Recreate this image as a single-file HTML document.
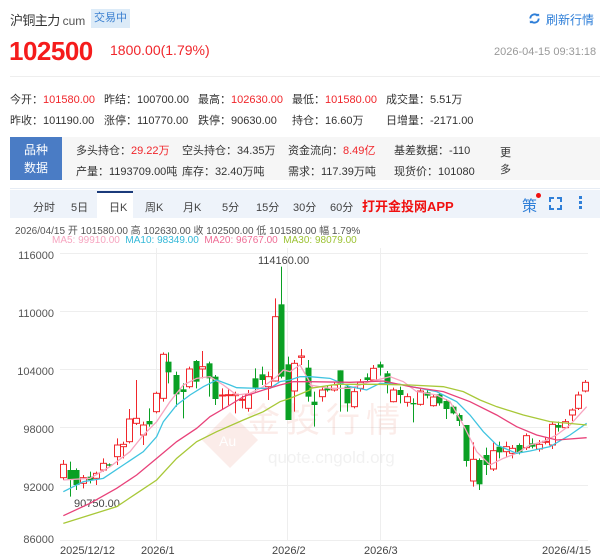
<!DOCTYPE html>
<html><head><meta charset="utf-8"><style>
*{margin:0;padding:0;box-sizing:border-box}
body{width:600px;height:555px;background:#fff;font-family:"Liberation Sans","Noto Sans CJK SC",sans-serif;position:relative;overflow:hidden;color:#333}
.a{position:absolute;white-space:nowrap}
.r{color:#f0262b}
.s{font-size:11px}
</style></head><body>
<div class="a" style="left:10px;top:10px;font-size:13px;color:#333;letter-spacing:-0.6px">沪铜主力 <span style="font-size:12px;color:#555;letter-spacing:0">cum</span></div>
<div class="a" style="left:91px;top:9px;width:39px;height:19px;background:#dcebf8;color:#3b80d0;font-size:11px;line-height:19px;text-align:center">交易中</div>
<svg class="a" style="left:528px;top:12px" width="13" height="13" viewBox="0 0 14 14"><path d="M2.5 7a4.5 4.5 0 0 1 8-2.8" stroke="#2f7fd8" stroke-width="2" fill="none"/><path d="M11.5 7a4.5 4.5 0 0 1-8 2.8" stroke="#2f7fd8" stroke-width="2" fill="none"/><path d="M9 2l3 0 0 3z" fill="#2f7fd8"/><path d="M5 12l-3 0 0-3z" fill="#2f7fd8"/></svg>
<div class="a" style="left:546px;top:11px;color:#2f7fd8;font-size:12px">刷新行情</div>
<div class="a" style="left:9px;top:36px;font-size:26px;font-weight:bold;color:#f51c1c;letter-spacing:-0.5px">102500</div>
<div class="a" style="left:110px;top:42px;font-size:14px;color:#f0262b">1800.00(1.79%)</div>
<div class="a" style="left:494px;top:46px;font-size:11px;color:#999">2026-04-15 09:31:18</div>
<div class="a" style="left:10px;top:76px;width:590px;height:1px;background:#eee"></div>

<div class="a s" style="left:10px;top:91px">今开：<span class="r">101580.00</span></div>
<div class="a s" style="left:104px;top:91px">昨结：100700.00</div>
<div class="a s" style="left:198px;top:91px">最高：<span class="r">102630.00</span></div>
<div class="a s" style="left:292px;top:91px">最低：<span class="r">101580.00</span></div>
<div class="a s" style="left:386px;top:91px">成交量：5.51万</div>
<div class="a s" style="left:10px;top:112px">昨收：101190.00</div>
<div class="a s" style="left:104px;top:112px">涨停：110770.00</div>
<div class="a s" style="left:198px;top:112px">跌停：90630.00</div>
<div class="a s" style="left:292px;top:112px">持仓：16.60万</div>
<div class="a s" style="left:386px;top:112px">日增量：-2171.00</div>

<div class="a" style="left:62px;top:137px;width:538px;height:43px;background:#f6f6f6"></div>
<div class="a" style="left:10px;top:137px;width:52px;height:43px;background:#4a7cc5;color:#fff;font-size:12px;line-height:18px;text-align:center;padding-top:4px;white-space:normal">品种<br>数据</div>
<div class="a s" style="left:76px;top:142px">多头持仓：<span class="r">29.22万</span></div>
<div class="a s" style="left:182px;top:142px">空头持仓：34.35万</div>
<div class="a s" style="left:288px;top:142px">资金流向：<span class="r">8.49亿</span></div>
<div class="a s" style="left:394px;top:142px">基差数据：-110</div>
<div class="a s" style="left:76px;top:163px">产量：1193709.00吨</div>
<div class="a s" style="left:182px;top:163px">库存：32.40万吨</div>
<div class="a s" style="left:288px;top:163px">需求：117.39万吨</div>
<div class="a s" style="left:394px;top:163px">现货价：101080</div>
<div class="a s" style="left:500px;top:145px;line-height:17px;white-space:normal;width:12px">更多</div>
<div class="a" style="left:10px;top:188px;width:590px;height:1px;background:#e6ecf4"></div>

<div class="a" style="left:10px;top:190px;width:590px;height:28px;background:#eef3fa"></div>
<div class="a" style="left:97px;top:191px;width:36px;height:27px;background:#fff;border-top:2px solid #1a3a7a"></div>
<div class="a s" style="top:199px;left:0;width:600px;color:#444">
<span class="a" style="left:33px">分时</span><span class="a" style="left:71px">5日</span><span class="a" style="left:109px">日K</span><span class="a" style="left:145px">周K</span><span class="a" style="left:183px">月K</span><span class="a" style="left:222px">5分</span><span class="a" style="left:256px">15分</span><span class="a" style="left:293px">30分</span><span class="a" style="left:330px">60分</span></div>
<div class="a" style="left:362px;top:196px;font-size:13px;font-weight:bold;color:#f01010">打开金投网APP</div>
<div class="a" style="left:522px;top:195px;font-size:15px;color:#2f7fd8">策</div>
<div class="a" style="left:536px;top:193px;width:5px;height:5px;border-radius:50%;background:#f01010"></div>
<svg class="a" style="left:549px;top:197px" width="13" height="13"><path d="M1 5V1h4M8 1h4v4M12 8v4H8M5 12H1V8" stroke="#2f7fd8" stroke-width="2" fill="none"/></svg>
<div class="a" style="left:579px;top:196px;width:3px;height:3px;background:#2f7fd8;box-shadow:0 5px #2f7fd8,0 10px #2f7fd8"></div>

<div class="a" style="left:15px;top:222px;font-size:10px;color:#555">2026/04/15 开 101580.00 高 102630.00 收 102500.00 低 101580.00 幅 1.79%</div>
<div class="a" style="left:52px;top:235px;font-size:10px"><span style="color:#f7a5c0">MA5: 99910.00</span>&nbsp; <span style="color:#33b8d8">MA10: 98349.00</span>&nbsp; <span style="color:#ef6d96">MA20: 96767.00</span>&nbsp; <span style="color:#9cc233">MA30: 98079.00</span></div>

<svg class="a" style="left:0;top:0" width="600" height="555" id="ch">
<g stroke="#eeeeee" stroke-width="1">
<line x1="60" y1="253.5" x2="588" y2="253.5"/><line x1="60" y1="311.5" x2="588" y2="311.5"/><line x1="60" y1="369.5" x2="588" y2="369.5"/><line x1="60" y1="427.5" x2="588" y2="427.5"/><line x1="60" y1="485.5" x2="588" y2="485.5"/><line x1="60" y1="540.5" x2="588" y2="540.5"/>
<line x1="156.5" y1="248" x2="156.5" y2="540"/><line x1="287.5" y1="248" x2="287.5" y2="540"/><line x1="380.5" y1="248" x2="380.5" y2="540"/>
</g>
<g font-size="11" fill="#555" font-family="Liberation Sans,sans-serif" text-anchor="end">
<text x="54" y="259">116000</text><text x="54" y="317">110000</text><text x="54" y="375">104000</text><text x="54" y="433">98000</text><text x="54" y="491">92000</text><text x="54" y="543">86000</text>
</g>
<g font-size="11" fill="#444" font-family="Liberation Sans,sans-serif">
<text x="60" y="554">2025/12/12</text><text x="141" y="554">2026/1</text><text x="272" y="554">2026/2</text><text x="364" y="554">2026/3</text><text x="542" y="554">2026/4/15</text>
<text x="258" y="264">114160.00</text><text x="74" y="507">90750.00</text>
</g>
<g opacity="0.13">
<path d="M230 412 L258 440 L230 468 L202 440Z" fill="#e8705a"/>
<text x="219" y="446" font-size="14" fill="#fff" font-family="Liberation Sans,sans-serif">Au</text>
<text x="246" y="432" font-size="34" fill="#e8705a" font-family="Noto Sans CJK SC,sans-serif" letter-spacing="6">金投行情</text>
<text x="268" y="463" font-size="17" fill="#999" font-family="Liberation Sans,sans-serif">quote.cngold.org</text>
</g>
<g id="cd"></g>
<g fill="none" stroke-width="1.3" id="ma"></g>
</svg>
<script>
var Z=function(v){return 245+v/3};
var c=[
[63,658,698,'r',645,705],[70,675,705,'g',650,755],[76,675,720,'g',670,735],[83,698,715,'r',690,730],[90,695,705,'g',680,715],[96,685,700,'r',680,720],[103,655,675,'r',640,680],[109,658,662,'g',655,665],[117,600,635,'r',580,660],[123,598,605,'r',590,640],[129,522,590,'r',492,595],[136,520,535,'r',405,540],[143,540,570,'r',530,600],[149,528,538,'g',490,545],[156,445,500,'r',440,505],[163,328,460,'r',322,470],[168,350,382,'g',322,415],[176,390,448,'g',380,485],[183,433,441,'g',415,520],[189,372,425,'r',365,430],[196,348,410,'g',345,430],[202,365,372,'r',318,400],[209,355,400,'g',350,455],[215,395,462,'g',390,480],[222,450,452,'r',430,495],[228,449,452,'r',430,480],[235,448,452,'r',440,505],[242,463,466,'r',452,490],[248,450,490,'r',435,500],[255,400,428,'g',370,440],[262,388,405,'g',365,420],[268,395,425,'r',380,465],[275,215,408,'r',160,410],[281,178,395,'g',65,400],[288,358,525,'g',335,525],[294,355,438,'r',345,500],[301,333,337,'r',312,360],[308,368,455,'g',345,470],[314,470,480,'g',440,545],
[322,435,455,'r',425,470],[327,430,436,'g',420,440],[334,420,435,'r',410,440],[340,376,415,'g',376,500],[347,425,475,'g',420,500],[354,440,485,'r',430,490],[360,412,430,'r',402,440],[367,397,405,'g',385,412],[373,370,405,'r',360,410],[380,358,368,'g',350,392],[387,385,420,'g',378,445],[393,435,470,'r',428,472],[400,435,450,'g',425,475],[407,455,472,'r',445,485],[413,474,478,'g',460,532],[420,438,478,'r',432,482],[427,442,452,'g',436,460],[433,456,482,'r',450,485],[439,448,475,'g',445,482],[446,468,492,'g',462,522],[453,485,505,'g',482,508],[459,510,528,'g',505,543],[466,540,648,'g',540,665],[473,643,708,'r',592,725],[479,645,718,'g',640,735],[486,630,660,'g',608,690],[493,617,672,'r',593,678],[499,605,622,'g',590,640],[506,605,620,'r',590,635],[512,610,625,'r',600,640],[519,600,622,'g',595,628],[526,572,608,'r',565,615],[532,595,605,'g',580,610],[539,598,612,'r',585,620],[545,589,592,'r',575,598],[552,538,600,'r',530,612],[558,540,548,'g',530,560],[565,530,548,'r',522,552],[572,495,510,'r',490,528],[578,450,490,'r',440,495],[585,412,438,'r',405,442]];
var s='';
c.forEach(function(d){var x=d[0],t=Z(d[1]),b=Z(d[2]),col=d[3]=='r'?'#f0262b':'#0aa024',h=Z(d[4]),l=Z(d[5]);if(b-t<1)b=t+1;
s+='<line x1="'+(x+0.5)+'" y1="'+h+'" x2="'+(x+0.5)+'" y2="'+l+'" stroke="'+col+'"/>';
if(d[3]=='r')s+='<rect x="'+(x-2.5)+'" y="'+t+'" width="6" height="'+(b-t)+'" fill="#fff" stroke="'+col+'"/>';
else s+='<rect x="'+(x-2.5)+'" y="'+t+'" width="6" height="'+(b-t)+'" fill="'+col+'"/>';});
document.getElementById('cd').innerHTML=s;
function P(a,b){var p=[];a.forEach(function(q){p.push((50+q[0]/3)+','+Z(q[1]))});b.forEach(function(q){p.push((310+q[0]/3)+','+Z(q[1]))});return p.join(' ')}
var m=[
['#f7a5c0',[[40,705],[120,700],[180,665],[240,620],[280,570],[320,530],[360,470],[400,420],[440,400],[480,395],[520,420],[560,450],[600,445],[640,425],[680,395],[700,375],[720,380],[750,360],[790,430]],[[0,420],[60,430],[120,430],[180,410],[240,395],[280,410],[320,440],[380,450],[420,470],[460,540],[500,620],[540,660],[580,640],[620,625],[660,600],[700,590],[740,570],[780,540],[830,485]]],
['#40c4e0',[[40,740],[100,710],[160,700],[220,660],[280,620],[320,575],[340,530],[380,480],[420,450],[460,425],[500,405],[540,420],[560,428],[620,430],[660,430],[690,410],[720,405],[750,395]],[[0,395],[60,400],[120,425],[170,435],[210,415],[270,418],[330,430],[380,440],[440,470],[480,510],[520,560],[560,600],[620,625],[660,618],[720,605],[780,570],[830,535]]],
['#e8427a',[[40,812],[120,775],[200,730],[260,690],[320,640],[380,590],[440,550],[480,515],[540,480],[580,455],[640,435],[690,420],[730,410],[780,410]],[[0,410],[120,412],[220,408],[300,425],[400,440],[480,470],[560,510],[620,545],[680,570],[740,585],[830,578]]],
['#a8c838',[[40,835],[120,810],[200,785],[260,745],[320,705],[380,640],[440,590],[500,560],[580,525],[640,500],[690,470],[720,460],[780,435]],[[0,430],[80,418],[200,418],[300,420],[400,425],[460,440],[510,465],[560,485],[640,510],[720,530],[830,540]]]];
var ms='';m.forEach(function(q){ms+='<polyline points="'+P(q[1],q[2])+'" stroke="'+q[0]+'"/>'});
document.getElementById('ma').innerHTML=ms;
</script>
</body></html>
